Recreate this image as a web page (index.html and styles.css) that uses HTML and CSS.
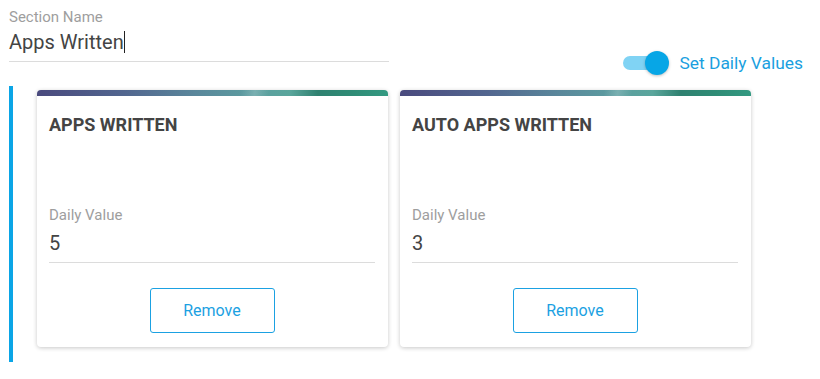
FILE: index.html
```html
<!DOCTYPE html>
<html lang="en">
<head>
  <meta charset="UTF-8">
  <meta name="viewport" content="width=device-width, initial-scale=1.0">
  <title>Section Editor</title>
  <link rel="stylesheet" href="styles.css">
</head>
<body>

  <div class="top">
    <!-- Section name field -->
    <div class="field section-field">
      <label class="field-label">Section Name</label>
      <div class="field-value">Apps Written<span class="caret"></span></div>
    </div>

    <!-- Daily values toggle -->
    <div class="toggle-row">
      <div class="switch"><span class="knob"></span></div>
      <span class="toggle-label">Set Daily Values</span>
    </div>
  </div>

  <div class="section">
    <div class="card">
      <div class="card-header"></div>
      <div class="card-body">
        <h3 class="card-title">APPS WRITTEN</h3>
        <div class="field daily-field">
          <label class="field-label">Daily Value</label>
          <div class="field-value">5</div>
        </div>
        <div class="card-actions">
          <button class="remove-button">Remove</button>
        </div>
      </div>
    </div>

    <div class="card">
      <div class="card-header"></div>
      <div class="card-body">
        <h3 class="card-title">AUTO APPS WRITTEN</h3>
        <div class="field daily-field">
          <label class="field-label">Daily Value</label>
          <div class="field-value">3</div>
        </div>
        <div class="card-actions">
          <button class="remove-button">Remove</button>
        </div>
      </div>
    </div>
  </div>

</body>
</html>
```

FILE: styles.css
```css
* {
  margin: 0;
  padding: 0;
  box-sizing: border-box;
}

body {
  font-family: Roboto, "Noto Sans", Arial, sans-serif;
  background-color: #fff;
  color: #444;
}

.top {
  display: flex;
  justify-content: space-between;
  align-items: flex-start;
  padding: 8px 17px 0 9px;
}

/* text fields */
.field {
  display: flex;
  flex-direction: column;
}

.field-label {
  font-size: 15px;
  line-height: 18px;
  color: #9e9e9e;
}

.field-value {
  font-size: 20px;
  line-height: 24px;
  color: #444;
  border-bottom: 1px solid #dcdcdc;
}

.section-field {
  width: 380px;
}

.section-field .field-value {
  margin-top: 4px;
  padding-bottom: 7px;
}

.caret {
  display: inline-block;
  width: 1px;
  height: 22px;
  background-color: #222;
  vertical-align: -4px;
}

/* toggle */
.toggle-row {
  display: flex;
  align-items: center;
  height: 24px;
  margin-top: 43px;
}

.switch {
  position: relative;
  width: 38px;
  height: 14px;
  border-radius: 7px;
  background-color: #80d3f4;
}

.knob {
  position: absolute;
  right: -8px;
  top: -5px;
  width: 24px;
  height: 24px;
  border-radius: 50%;
  background-color: #07a6e6;
  box-shadow: 0 1px 3px rgba(0, 0, 0, 0.25);
}

.toggle-label {
  margin-left: 18px;
  font-size: 17.4px;
  color: #1a9fe0;
}

/* cards */
.section {
  display: flex;
  gap: 12px;
  margin: 11px 0 0 9px;
  padding: 4px 0 15px 24px;
  border-left: 4px solid #0aa5e6;
}

.card {
  width: 351px;
  background-color: #fff;
  border-radius: 4px;
  box-shadow: 0 1px 4px rgba(0, 0, 0, 0.22);
  overflow: hidden;
}

.card-header {
  height: 6px;
  background:
    linear-gradient(100deg, transparent 58%, rgba(255, 255, 255, 0.18) 62%, transparent 66%),
    linear-gradient(90deg, #4a4a7e 0%, #52668f 25%, #5a879b 45%, #5c9ea0 62%, #5aa69c 72%, #2f8170 80%, #2f8c76 90%, #349a82 100%);
}

.card-body {
  padding: 18px 13px 14px 12px;
}

.card-title {
  font-size: 18px;
  line-height: 22px;
  font-weight: bold;
  color: #444;
}

.daily-field {
  margin-top: 70px;
}

.daily-field .field-value {
  margin-top: 7px;
  padding-bottom: 7px;
}

.card-actions {
  display: flex;
  justify-content: center;
  margin-top: 25px;
}

.remove-button {
  width: 125px;
  height: 45px;
  font-family: inherit;
  font-size: 16px;
  color: #1ba1e2;
  background-color: #fff;
  border: 1px solid #1ba1e2;
  border-radius: 3px;
  cursor: pointer;
}
```
